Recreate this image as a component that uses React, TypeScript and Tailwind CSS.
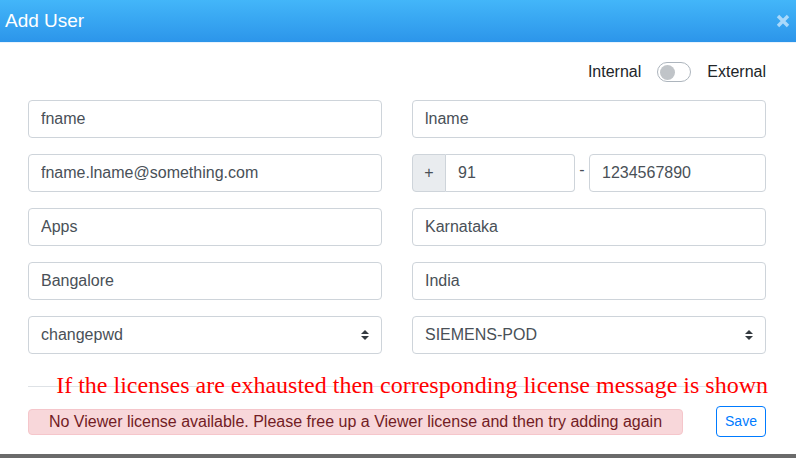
import React, { useState } from 'react';

const inputCls =
  'h-[38px] w-full min-w-0 rounded-[4px] border border-[#ced4da] bg-white px-[12px] text-[16px] text-[#495057] outline-none';

function SelectArrow() {
  return (
    <svg width="8" height="10" viewBox="0 0 8 10" className="shrink-0">
      <path d="M4 0 L8 4 H0 Z" fill="#343a40" />
      <path d="M4 10 L0 6 H8 Z" fill="#343a40" />
    </svg>
  );
}

function SelectBox({ value }: { value: string }) {
  return (
    <div className="flex h-[38px] w-full items-center justify-between rounded-[4px] border border-[#ced4da] bg-white pl-[12px] pr-[12px] text-[16px] text-[#495057]">
      <span>{value}</span>
      <SelectArrow />
    </div>
  );
}

export default function App() {
  const [external, setExternal] = useState(false);

  return (
    <div
      className="h-[458px] w-[796px] overflow-hidden bg-[#6b6b6b]"
      style={{ fontFamily: '"Liberation Sans", Arial, sans-serif' }}
    >
      <div className="h-[454px] w-full bg-white">
        <div className="flex h-[43px] items-center justify-between border-b border-[#e8f3fd] bg-gradient-to-b from-[#43b6f9] to-[#2c95ea] pl-[5px] pr-[6px]">
          <span className="text-[19px] text-white">Add User</span>
          <svg width="14" height="14" viewBox="0 0 14 14">
            <path d="M2 2 L12 12 M12 2 L2 12" stroke="#a9d9fb" strokeWidth="3.4" strokeLinecap="butt" />
          </svg>
        </div>

        <div className="pl-[28px] pr-[30px]">
          <div className="flex h-[57px] items-center justify-end pt-[1px] text-[16px] text-[#212529]">
            <span>Internal</span>
            <button
              onClick={() => setExternal(!external)}
              className="ml-[16px] mr-[16px] flex h-[20px] w-[34px] items-center rounded-full border border-[#adb5bd] bg-white px-[2px]"
            >
              <span className="block h-[15px] w-[15px] rounded-full bg-[#c0c4c8]" />
            </button>
            <span>External</span>
          </div>

          <div className="grid grid-cols-2 gap-x-[30px] gap-y-[16px]">
            <input className={inputCls} defaultValue="fname" />
            <input className={inputCls} defaultValue="lname" />
            <input className={inputCls} defaultValue="fname.lname@something.com" />
            <div className="flex min-w-0 items-center">
              <div className="flex h-[38px] w-[34px] shrink-0 items-center justify-center rounded-l-[4px] border border-[#ced4da] bg-[#e9ecef] text-[16px] text-[#495057]">
                +
              </div>
              <input
                className="h-[38px] w-[129px] shrink-0 rounded-r-[4px] border border-l-0 border-[#ced4da] bg-white px-[12px] text-[16px] text-[#495057] outline-none"
                defaultValue="91"
              />
              <span className="w-[14px] shrink-0 pb-[6px] text-center text-[16px] text-[#495057]">-</span>
              <input className={inputCls} defaultValue="1234567890" />
            </div>
            <input className={inputCls} defaultValue="Apps" />
            <input className={inputCls} defaultValue="Karnataka" />
            <input className={inputCls} defaultValue="Bangalore" />
            <input className={inputCls} defaultValue="India" />
            <SelectBox value="changepwd" />
            <SelectBox value="SIEMENS-POD" />
          </div>

          <div className="relative mt-[17px] h-[32px]">
            <div className="absolute left-0 right-0 top-[15px] h-px bg-[#dee2e6]" />
            <div
              className="absolute right-[-2px] top-[0px] whitespace-nowrap text-[24px] leading-[28px] text-[#ff0000]"
              style={{
                fontFamily: '"Liberation Serif", "Times New Roman", serif',
                textShadow: '0 0 1px #fff, 0 0 1px #fff',
              }}
            >
              If the licenses are exhausted then corresponding license message is shown
            </div>
          </div>

          <div className="mt-[3px] flex items-center justify-between">
            <div className="flex h-[26px] w-[655px] items-center justify-center rounded-[4px] border border-[#f5c6cb] bg-[#f8d7da] text-[16px] text-[#721c24]">
              No Viewer license available. Please free up a Viewer license and then try adding again
            </div>
            <button className="h-[31px] w-[50px] rounded-[4px] border border-[#007bff] bg-white text-[14px] text-[#007bff]">
              Save
            </button>
          </div>
        </div>
      </div>
    </div>
  );
}
